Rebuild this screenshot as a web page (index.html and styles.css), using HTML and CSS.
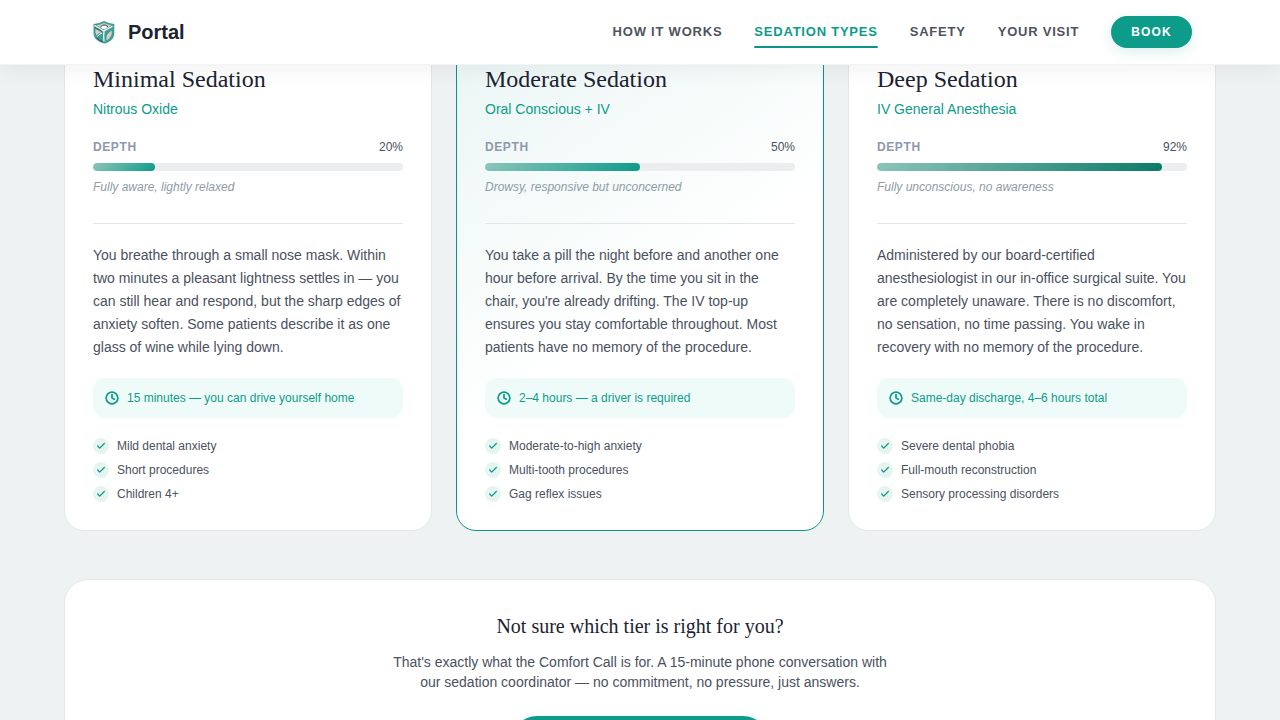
FILE: index.html
```html
<!DOCTYPE html>
<html lang="en">
<head>
<meta charset="utf-8">
<meta name="viewport" content="width=device-width, initial-scale=1">
<title>Portal – Sedation Types</title>
<link rel="stylesheet" href="styles.css">
</head>
<body>
<svg class="sprite" aria-hidden="true">
  <symbol id="clock" viewBox="0 0 24 24"><circle cx="12" cy="12" r="10"/><path d="M12 6v6l4 2"/></symbol>
  <symbol id="check" viewBox="0 0 24 24"><path d="M20 6 9 17l-5-5"/></symbol>
</svg>
<header class="header">
  <div class="header-inner">
    <a class="brand" href="#">
      <svg class="brand-logo" viewBox="0 0 32 32" aria-hidden="true">
        <path d="M5.500 8Q11.500 7.500 16 5Q21 7.500 26.300 8V17C26.300 22.500 22.500 26.200 16.500 27.500C10 26.200 5.500 22.500 5.500 17Z" fill="#3f9f97"/>
        <path d="M8.500 9.200Q12.500 8.800 16 7Q20 8.800 23.500 9.200L16.300 13.500Z" fill="#dccfc3"/>
        <path d="M13 11.600Q16.300 8 19.600 11.600L16.300 13.600Z" fill="#fff"/>
        <path d="M12.500 10.800Q16.300 7 20 10.800" fill="none" stroke="#39484b" stroke-width="1"/>
        <path d="M7.500 13L13.500 16.200Q10 17 8.200 19.500Q7.300 17 7.500 13Z" fill="#dccfc3"/>
        <path d="M7 11.300L13.800 15.200" fill="none" stroke="#39484b" stroke-width="1"/>
        <path d="M8.500 21.500Q11 24.500 14.500 25.600" fill="none" stroke="#39484b" stroke-width="1"/>
        <path d="M9.300 20.600Q11 17.800 14 17.200" fill="none" stroke="#fff" stroke-width="1"/>
        <path d="M23.800 14.500Q24.500 21.500 18.500 24.200Q17.500 18 23.800 14.500Z" fill="#dccfc3"/>
        <path d="M6.500 9.500L15.800 15L24.500 10.300M16 15.500Q15.300 20 16 25.500" fill="none" stroke="#fff" stroke-width="1.200"/>
      </svg>
      <span>Portal</span>
    </a>
    <nav class="nav" aria-label="Main">
      <a class="nav-link" href="#">HOW IT WORKS</a>
      <a class="nav-link nav-link-active" href="#types" aria-current="page">SEDATION TYPES</a>
      <a class="nav-link" href="#">SAFETY</a>
      <a class="nav-link" href="#">YOUR VISIT</a>
      <button class="button button-small" type="button">BOOK</button>
    </nav>
  </div>
</header>
<main class="main" id="types">
  <div class="tiers">
    <article class="card">
      <h3 class="card-title">Minimal Sedation</h3>
      <p class="card-method">Nitrous Oxide</p>
      <div class="depth-row"><span class="depth-label">DEPTH</span><span>20%</span></div>
      <div class="track"><div class="fill" style="width:20%"></div></div>
      <p class="depth-note">Fully aware, lightly relaxed</p>
      <p class="card-text">You breathe through a small nose mask. Within two minutes a pleasant lightness settles in — you can still hear and respond, but the sharp edges of anxiety soften. Some patients describe it as one glass of wine while lying down.</p>
      <p class="duration"><svg class="icon-clock" aria-hidden="true"><use href="#clock"/></svg>15 minutes — you can drive yourself home</p>
      <ul class="uses">
        <li class="use"><span class="tick"><svg class="icon-check" aria-hidden="true"><use href="#check"/></svg></span>Mild dental anxiety</li>
        <li class="use"><span class="tick"><svg class="icon-check" aria-hidden="true"><use href="#check"/></svg></span>Short procedures</li>
        <li class="use"><span class="tick"><svg class="icon-check" aria-hidden="true"><use href="#check"/></svg></span>Children 4+</li>
      </ul>
    </article>
    <article class="card card-featured">
      <h3 class="card-title">Moderate Sedation</h3>
      <p class="card-method">Oral Conscious + IV</p>
      <div class="depth-row"><span class="depth-label">DEPTH</span><span>50%</span></div>
      <div class="track"><div class="fill" style="width:50%"></div></div>
      <p class="depth-note">Drowsy, responsive but unconcerned</p>
      <p class="card-text">You take a pill the night before and another one hour before arrival. By the time you sit in the chair, you're already drifting. The IV top-up ensures you stay comfortable throughout. Most patients have no memory of the procedure.</p>
      <p class="duration"><svg class="icon-clock" aria-hidden="true"><use href="#clock"/></svg>2–4 hours — a driver is required</p>
      <ul class="uses">
        <li class="use"><span class="tick"><svg class="icon-check" aria-hidden="true"><use href="#check"/></svg></span>Moderate-to-high anxiety</li>
        <li class="use"><span class="tick"><svg class="icon-check" aria-hidden="true"><use href="#check"/></svg></span>Multi-tooth procedures</li>
        <li class="use"><span class="tick"><svg class="icon-check" aria-hidden="true"><use href="#check"/></svg></span>Gag reflex issues</li>
      </ul>
    </article>
    <article class="card">
      <h3 class="card-title">Deep Sedation</h3>
      <p class="card-method">IV General Anesthesia</p>
      <div class="depth-row"><span class="depth-label">DEPTH</span><span>92%</span></div>
      <div class="track"><div class="fill fill-deep" style="width:92%"></div></div>
      <p class="depth-note">Fully unconscious, no awareness</p>
      <p class="card-text">Administered by our board-certified anesthesiologist in our in-office surgical suite. You are completely unaware. There is no discomfort, no sensation, no time passing. You wake in recovery with no memory of the procedure.</p>
      <p class="duration"><svg class="icon-clock" aria-hidden="true"><use href="#clock"/></svg>Same-day discharge, 4–6 hours total</p>
      <ul class="uses">
        <li class="use"><span class="tick"><svg class="icon-check" aria-hidden="true"><use href="#check"/></svg></span>Severe dental phobia</li>
        <li class="use"><span class="tick"><svg class="icon-check" aria-hidden="true"><use href="#check"/></svg></span>Full-mouth reconstruction</li>
        <li class="use"><span class="tick"><svg class="icon-check" aria-hidden="true"><use href="#check"/></svg></span>Sensory processing disorders</li>
      </ul>
    </article>
  </div>
  <section class="help">
    <h3 class="help-title">Not sure which tier is right for you?</h3>
    <p class="help-text">That's exactly what the Comfort Call is for. A 15-minute phone conversation with our sedation coordinator — no commitment, no pressure, just answers.</p>
    <button class="button button-large" type="button">Schedule a Comfort Call</button>
  </section>
</main>
</body>
</html>
```

FILE: styles.css
```css
*, *::before, *::after { box-sizing: border-box; }
body {
  margin: 0;
  background: #eef2f3;
  color: #4a5160;
  font-family: "Liberation Sans", Arial, sans-serif;
  font-size: 14px;
  line-height: 20px;
}
h3, p, ul { margin: 0; padding: 0; }
a { color: inherit; text-decoration: none; }
.sprite { display: none; }

.header {
  position: sticky;
  top: 0;
  z-index: 10;
  background: #fff;
  border-bottom: 1px solid #f3f4f5;
  box-shadow: 0 4px 20px rgba(0, 0, 0, 0.06);
}
.header-inner {
  display: flex;
  align-items: center;
  justify-content: space-between;
  max-width: 1152px;
  height: 64px;
  margin: 0 auto;
  padding: 0 24px;
}
.brand {
  display: flex;
  align-items: center;
  gap: 8px;
  color: #1c2333;
  font-size: 20px;
  font-weight: 700;
}
.brand-logo { width: 32px; height: 32px; }
.nav { display: flex; align-items: center; gap: 32px; }
.nav-link {
  position: relative;
  padding: 6px 0;
  font-size: 13px;
  font-weight: 700;
  letter-spacing: 0.06em;
  color: #4f535d;
}
.nav-link-active { color: #0d9b8a; }
.nav-link-active::after {
  content: "";
  position: absolute;
  left: 0;
  right: 0;
  bottom: 0;
  height: 2px;
  border-radius: 1px;
  background: #0d9488;
}
.button {
  border: 0;
  border-radius: 999px;
  background: #0d9b8a;
  color: #fff;
  font-family: inherit;
  font-weight: 700;
  cursor: pointer;
  box-shadow: 0 4px 14px rgba(13, 155, 138, 0.15);
}
.button-small {
  padding: 8px 20px;
  font-size: 12px;
  line-height: 16px;
  letter-spacing: 0.1em;
}
.button-large { padding: 16px 48px; font-size: 14px; line-height: 20px; }

.main {
  max-width: 1200px;
  margin: -30px auto 0;
  padding: 0 24px 64px;
}
.tiers {
  display: grid;
  grid-template-columns: repeat(3, 1fr);
  gap: 24px;
}
.card {
  padding: 28px;
  border: 1px solid #e2e7e9;
  border-radius: 20px;
  background: #fff;
}
.card-featured {
  border-color: #0d9488;
  background: linear-gradient(145deg, #eaf6f4 0%, #fff 55%);
}
.card-title {
  margin-bottom: 5px;
  color: #1c2333;
  font-family: "Liberation Serif", "Times New Roman", serif;
  font-size: 24px;
  font-weight: 400;
  line-height: 30px;
}
.card-method { margin-bottom: 19px; color: #0d9b8a; }
.depth-row {
  display: flex;
  justify-content: space-between;
  margin-bottom: 7px;
  font-size: 12px;
  line-height: 18px;
}
.depth-label { color: #8e99ae; font-weight: 700; letter-spacing: 0.05em; }
.track {
  height: 8px;
  border-radius: 4px;
  background: #ebedee;
  overflow: hidden;
}
.fill {
  height: 100%;
  border-radius: 4px;
  background: linear-gradient(135deg, #8cc5ba, #0d9b8a);
}
.fill-deep { background: linear-gradient(135deg, #8cc5ba, #0b7a69); }
.depth-note {
  margin: 7px 0 27px;
  color: #8f9baa;
  font-size: 12px;
  font-style: italic;
  line-height: 18px;
}
.card-text {
  padding-top: 20px;
  border-top: 1px solid #e2e7e9;
  line-height: 23px;
}
.duration {
  display: flex;
  align-items: center;
  gap: 8px;
  margin: 19px 0 20px;
  padding: 11px 12px;
  border-radius: 12px;
  background: #effbf8;
  color: #0d9b8a;
  font-size: 12px;
  line-height: 18px;
}
.icon-clock, .icon-check {
  flex: none;
  fill: none;
  stroke: currentColor;
  stroke-linecap: round;
  stroke-linejoin: round;
  overflow: visible;
}
.icon-clock { width: 14px; height: 14px; stroke-width: 3; }
.icon-check { width: 10px; height: 10px; stroke-width: 3; }
.uses { display: grid; gap: 8px; list-style: none; }
.use {
  display: flex;
  align-items: center;
  gap: 8px;
  font-size: 12px;
  line-height: 16px;
}
.tick {
  display: grid;
  place-items: center;
  width: 16px;
  height: 16px;
  border-radius: 50%;
  background: #e7f5f1;
  color: #0d9b8a;
}
.help {
  display: flex;
  flex-direction: column;
  align-items: center;
  margin-top: 48px;
  padding: 32px;
  border: 1px solid #e2e7e9;
  border-radius: 24px;
  background: #fff;
  text-align: center;
}
.help-title {
  margin-bottom: 12px;
  color: #1c2333;
  font-family: "Liberation Serif", "Times New Roman", serif;
  font-size: 20px;
  font-weight: 400;
  line-height: 28px;
}
.help-text { max-width: 512px; margin-bottom: 24px; }
@media (max-width: 860px) {
  .tiers { grid-template-columns: 1fr; }
  .nav { gap: 16px; }
}
```
